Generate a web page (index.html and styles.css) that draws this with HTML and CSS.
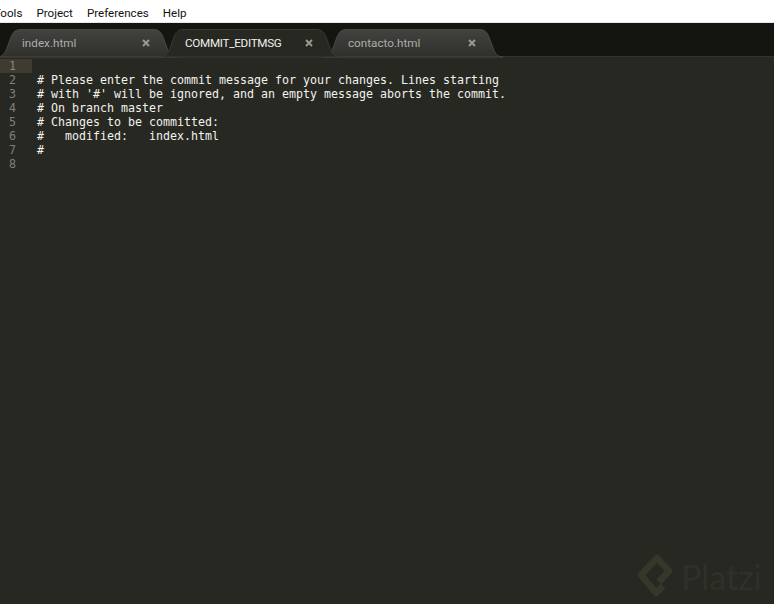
FILE: index.html
```html
<!DOCTYPE html>
<html lang="en">
<head>
<meta charset="utf-8">
<title>COMMIT_EDITMSG</title>
<link rel="stylesheet" href="styles.css">
</head>
<body>
<div class="menubar">
  <span class="menu-item">Tools</span>
  <span class="menu-item">Project</span>
  <span class="menu-item">Preferences</span>
  <span class="menu-item">Help</span>
</div>
<div class="tabbar">
  <div class="tab tab-first">
    <svg class="tab-shape" viewBox="0 0 180 28"><defs><linearGradient id="tabgrad" x1="0" y1="0" x2="0" y2="1"><stop offset="0" stop-color="#42423f"/><stop offset="1" stop-color="#2f2f2c"/></linearGradient></defs><path class="tab-fill" d="M0 28C6 28 8 24 10 19L14 8C16 3 18 .5 24 .5H156C162 .5 164 3 166 8L170 19C172 24 174 28 180 28Z"/></svg>
    <span class="tab-label">index.html</span>
    <svg class="tab-close" viewBox="0 0 8 8"><path d="M1 1L7 7M7 1L1 7"/></svg>
  </div>
  <div class="tab tab-active">
    <svg class="tab-shape" viewBox="0 0 180 28"><path class="tab-fill-active" d="M0 28C6 28 8 24 10 19L14 8C16 3 18 .5 24 .5H156C162 .5 164 3 166 8L170 19C172 24 174 28 180 28Z"/></svg>
    <span class="tab-label">COMMIT_EDITMSG</span>
    <svg class="tab-close" viewBox="0 0 8 8"><path d="M1 1L7 7M7 1L1 7"/></svg>
  </div>
  <div class="tab tab-last">
    <svg class="tab-shape" viewBox="0 0 180 28"><path class="tab-fill" d="M0 28C6 28 8 24 10 19L14 8C16 3 18 .5 24 .5H156C162 .5 164 3 166 8L170 19C172 24 174 28 180 28Z"/></svg>
    <span class="tab-label">contacto.html</span>
    <svg class="tab-close" viewBox="0 0 8 8"><path d="M1 1L7 7M7 1L1 7"/></svg>
  </div>
</div>
<main class="editor">
  <div class="gutter">
    <div class="num num-active">1</div>
    <div class="num">2</div>
    <div class="num">3</div>
    <div class="num">4</div>
    <div class="num">5</div>
    <div class="num">6</div>
    <div class="num">7</div>
    <div class="num">8</div>
  </div>
  <pre class="code"><span class="line"> </span>
<span class="line"># Please enter the commit message for your changes. Lines starting</span>
<span class="line"># with '#' will be ignored, and an empty message aborts the commit.</span>
<span class="line"># On branch master</span>
<span class="line"># Changes to be committed:</span>
<span class="line">#   modified:   index.html</span>
<span class="line">#</span>
<span class="line"> </span></pre>
</main>
<div class="watermark">
  <svg class="wm-logo" viewBox="0 0 40 46"><path d="M23 29L33 18L21 5L5 22L20 40L27 33" fill="none" stroke="#33382a" stroke-width="6.500" stroke-linejoin="round"/></svg>
  <span class="wm-text">Platzi</span>
</div>
</body>
</html>
```
FILE: styles.css
```css
html, body {
  margin: 0;
  padding: 0;
  width: 774px;
  height: 604px;
  overflow: hidden;
  background: #272822;
}
body {
  position: relative;
  display: flex;
  flex-direction: column;
}
.menubar {
  height: 23px;
  flex: none;
  background: #fff;
  display: flex;
  align-items: center;
  gap: 14px;
  margin-left: -6px;
  padding-top: 3px;
  box-sizing: border-box;
  font: 11.600px "Roboto", sans-serif;
  color: #111;
  border-bottom: 1px solid #e8e8e8;
}
.tabbar {
  height: 34px;
  flex: none;
  background: #141411;
  box-shadow: inset 0 -1px 0 #33332e;
  display: flex;
  align-items: flex-end;
  box-sizing: border-box;
}
.tab {
  position: relative;
  width: 180px;
  height: 28px;
  margin-right: -17px;
  flex: none;
  font: 11.700px "Roboto", sans-serif;
}
.tab-first { margin-left: -3px; z-index: 1; }
.tab-active { z-index: 3; }
.tab-last { z-index: 1; }
.tab-shape {
  position: absolute;
  inset: 0;
  width: 100%;
  height: 100%;
  overflow: visible;
}
.tab-fill {
  fill: url(#tabgrad);
  stroke: #484845;
  stroke-width: 1;
}
.tab-fill-active {
  fill: #272822;
  stroke: #3a3a35;
  stroke-width: 1;
}
.tab-label {
  position: absolute;
  top: 7px;
  left: 25px;
  color: #aeaeaa;
  white-space: nowrap;
}
.tab-active .tab-label {
  color: #f0f0ee;
  letter-spacing: -0.3px;
}
.tab-close {
  position: absolute;
  top: 10px;
  left: 145px;
  width: 8px;
  height: 8px;
  fill: none;
  stroke: #99998f;
  stroke-width: 2;
}
.editor {
  flex: 1;
  display: flex;
  padding-top: 2px;
  background: #272822;
}
.gutter {
  width: 32px;
  flex: none;
}
.num {
  height: 14px;
  padding-left: 9px;
  font: 11.630px/14px "DejaVu Sans Mono", monospace;
  color: #7f807a;
}
.num-active {
  background: #3e3b30;
  color: #8a8678;
}
.code {
  margin: 0 0 0 5px;
  font: 11.630px/14px "DejaVu Sans Mono", monospace;
  color: #f2f2ee;
}
.line { display: inline-block; height: 14px; }
.watermark {
  position: absolute;
  left: 636px;
  top: 553px;
  display: flex;
  align-items: center;
  gap: 5px;
}
.wm-logo {
  width: 40px;
  height: 46px;
}
.wm-text {
  font: 34px "Lato", sans-serif;
  color: #2f3029;
}
```
